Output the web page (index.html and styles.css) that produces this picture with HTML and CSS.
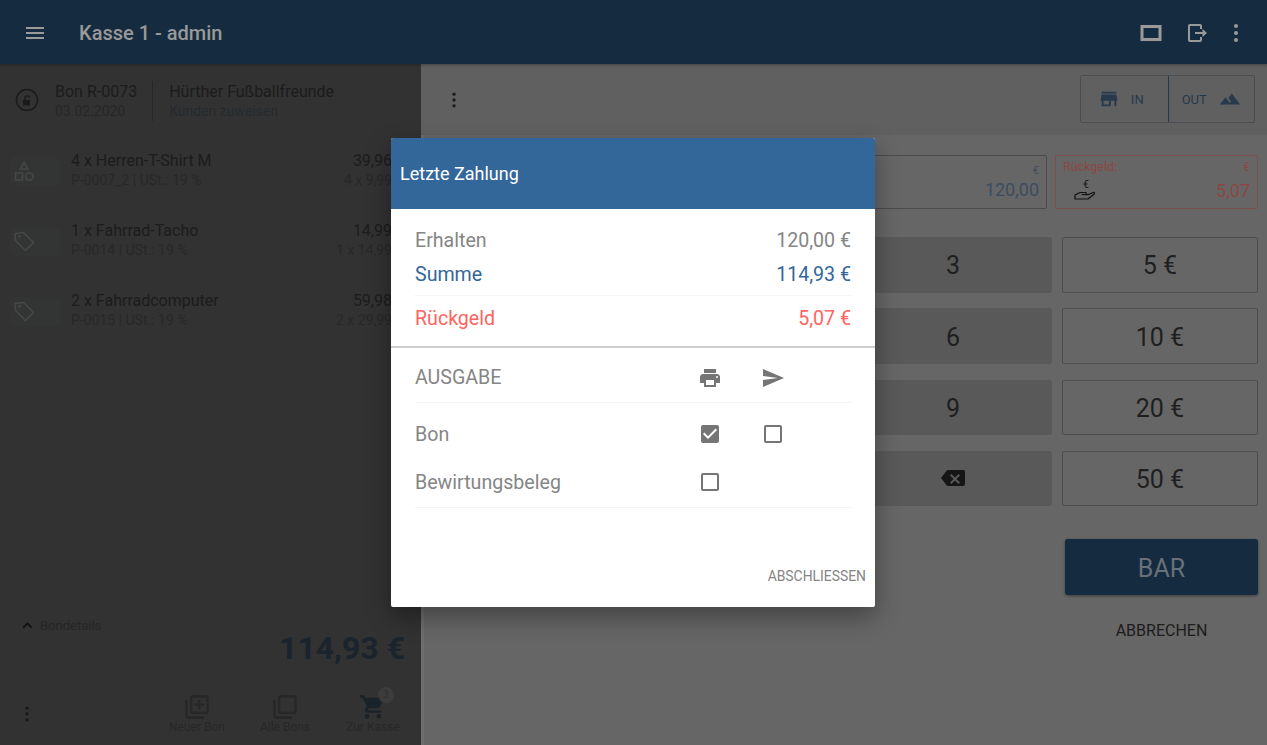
FILE: index.html
```html
<!DOCTYPE html>
<html lang="de">
<head>
    <meta charset="UTF-8">
    <meta name="viewport" content="width=device-width, initial-scale=1.0">
    <title>Kasse 1 - admin</title>
    <link rel="stylesheet" href="styles.css">
</head>
<body>
    <!-- Top bar -->
    <header class="topbar">
        <svg class="icon menu-icon" viewBox="0 0 24 24"><path d="M3 18h18v-2H3v2zm0-5h18v-2H3v2zm0-7v2h18V6H3z"/></svg>
        <h1 class="topbar-title">Kasse 1 - admin</h1>
        <div class="topbar-actions">
            <svg class="icon screen-icon" viewBox="0 0 24 24"><path d="M1.500 4h21v16h-21V4zm3 3v10h15V7h-15z" fill-rule="evenodd"/></svg>
            <svg class="icon" viewBox="0 0 24 24"><path d="M5 3h10a2 2 0 0 1 2 2v3h-2V5H5v14h10v-3h2v3a2 2 0 0 1-2 2H5a2 2 0 0 1-2-2V5a2 2 0 0 1 2-2zm12.500 5 4.500 4-4.500 4v-3H10v-2h7.500V8z"/></svg>
            <svg class="icon" viewBox="0 0 24 24"><circle cx="12" cy="5" r="2"/><circle cx="12" cy="12" r="2"/><circle cx="12" cy="19" r="2"/></svg>
        </div>
    </header>

    <main class="main">
        <!-- Receipt -->
        <section class="receipt">
            <div class="receipt-head">
                <svg class="lock-icon" viewBox="0 0 24 24"><circle cx="12" cy="12" r="10.500" fill="none" stroke="#1a1a1a" stroke-width="1.500"/><path d="M8 12h7v5.500H8z" fill="#1a1a1a"/><path d="M10 12v-2a2.200 2.200 0 0 1 4.400 0" fill="none" stroke="#1a1a1a" stroke-width="1.300"/></svg>
                <div class="head-col">
                    <span class="head-title">Bon R-0073</span>
                    <span class="head-sub">03.02.2020</span>
                </div>
                <div class="head-col head-customer">
                    <span class="head-title">Hürther Fußballfreunde</span>
                    <span class="head-link">Kunden zuweisen</span>
                </div>
            </div>

            <ul class="lines">
                <li class="line">
                    <div class="line-thumb">
                        <svg viewBox="0 0 24 24" class="thumb-icon"><path d="M12 3.500l3.800 6.500H8.200zM3.500 14h7v7h-7z" fill="none" stroke="#474747" stroke-width="1.500"/><circle cx="17.300" cy="17.500" r="3.700" fill="none" stroke="#474747" stroke-width="1.500"/></svg>
                    </div>
                    <div class="line-info">
                        <span class="line-name">4 x Herren-T-Shirt M</span>
                        <span class="line-sub">P-0007_2 | USt.: 19 %</span>
                    </div>
                    <div class="line-price">
                        <span class="line-name">39,96</span>
                        <span class="line-sub">4 x 9,99</span>
                    </div>
                </li>
                <li class="line">
                    <div class="line-thumb">
                        <svg viewBox="0 0 24 24" class="thumb-icon"><path d="M3 4.500 11.500 3.500 21.500 13.500 13.500 21.500 3.500 11.500z" fill="none" stroke="#474747" stroke-width="1.500" stroke-linejoin="round"/><circle cx="7.500" cy="7.500" r="1.300" fill="#474747"/></svg>
                    </div>
                    <div class="line-info">
                        <span class="line-name">1 x Fahrrad-Tacho</span>
                        <span class="line-sub">P-0014 | USt.: 19 %</span>
                    </div>
                    <div class="line-price">
                        <span class="line-name">14,99</span>
                        <span class="line-sub">1 x 14,99</span>
                    </div>
                </li>
                <li class="line">
                    <div class="line-thumb">
                        <svg viewBox="0 0 24 24" class="thumb-icon"><path d="M3 4.500 11.500 3.500 21.500 13.500 13.500 21.500 3.500 11.500z" fill="none" stroke="#474747" stroke-width="1.500" stroke-linejoin="round"/><circle cx="7.500" cy="7.500" r="1.300" fill="#474747"/></svg>
                    </div>
                    <div class="line-info">
                        <span class="line-name">2 x Fahrradcomputer</span>
                        <span class="line-sub">P-0015 | USt.: 19 %</span>
                    </div>
                    <div class="line-price">
                        <span class="line-name">59,98</span>
                        <span class="line-sub">2 x 29,99</span>
                    </div>
                </li>
            </ul>

            <div class="receipt-foot">
                <div class="details-toggle">
                    <svg viewBox="0 0 24 24" class="chevron"><path d="M7.400 15.400 12 10.800l4.600 4.600L18 14l-6-6-6 6z"/></svg>
                    <span>Bondetails</span>
                </div>
                <div class="total">114,93 €</div>
                <div class="foot-bar">
                    <svg class="more-icon" viewBox="0 0 24 24"><circle cx="12" cy="5" r="2"/><circle cx="12" cy="12" r="2"/><circle cx="12" cy="19" r="2"/></svg>
                    <div class="foot-action">
                        <svg viewBox="0 0 24 24"><path d="M4 6H2v14a2 2 0 0 0 2 2h14v-2H4V6zm16-4H8a2 2 0 0 0-2 2v12a2 2 0 0 0 2 2h12a2 2 0 0 0 2-2V4a2 2 0 0 0-2-2zm0 14H8V4h12v12zm-7-2h2v-3h3V9h-3V6h-2v3h-3v2h3v3z"/></svg>
                        <span>Neuer Bon</span>
                    </div>
                    <div class="foot-action">
                        <svg viewBox="0 0 24 24"><path d="M4 6H2v14a2 2 0 0 0 2 2h14v-2H4V6zm16-4H8a2 2 0 0 0-2 2v12a2 2 0 0 0 2 2h12a2 2 0 0 0 2-2V4a2 2 0 0 0-2-2zm0 14H8V4h12v12z"/></svg>
                        <span>Alle Bons</span>
                    </div>
                    <div class="foot-action cart">
                        <svg viewBox="0 0 24 24"><path d="M7 18a2 2 0 1 0 0 4 2 2 0 0 0 0-4zM1 2v2h2l3.600 7.600-1.400 2.400C4.500 15.400 5.500 17 7 17h12v-2H7.400l1.100-2h7.500c.700 0 1.400-.400 1.700-1L21.300 5.500c.400-.700-.100-1.500-.900-1.500H5.200l-.900-2H1zm16 16a2 2 0 1 0 0 4 2 2 0 0 0 0-4z"/></svg>
                        <span>Zur Kasse</span>
                        <em class="cart-badge">3</em>
                    </div>
                </div>
            </div>
        </section>

        <!-- Payment side -->
        <section class="pay">
            <div class="pay-bar">
                <svg class="more-icon pay-more" viewBox="0 0 24 24"><circle cx="12" cy="5" r="2"/><circle cx="12" cy="12" r="2"/><circle cx="12" cy="19" r="2"/></svg>
                <div class="inout">
                    <div class="inout-btn inout-first">
                        <svg viewBox="0 0 24 24"><path d="M20 4H4v2h16V4zm1 10v-2l-1-5H4l-1 5v2h1v6h10v-6h4v6h2v-6h1zm-9 4H6v-4h6v4z"/></svg>
                        <span>IN</span>
                    </div>
                    <div class="inout-btn">
                        <span>OUT</span>
                        <svg viewBox="0 0 24 24"><path d="M14 6l-3.750 5 2.850 3.800-1.600 1.200C9.810 13.750 7 10 7 10l-6 8h22L14 6z"/></svg>
                    </div>
                </div>
            </div>

            <div class="pay-body">
                <div class="amounts">
                    <div class="amount-box">
                        <span class="amount-unit">€</span>
                        <span class="amount-value">120,00</span>
                    </div>
                    <div class="amount-box amount-change">
                        <div class="amount-top"><span>Rückgeld:</span><span>€</span></div>
                        <div class="amount-row">
                            <svg class="hand-icon" viewBox="0 0 24 24"><path d="M2 21v-4l5-2.500h5.500c1.200 0 1.200 2 0 2H9l6 .200 5-2.200c1.500-.500 2 1 1 1.700L15 21z" fill="none" stroke="#111" stroke-width="1.200" stroke-linejoin="round"/><text x="13" y="10" font-size="10" fill="#111" text-anchor="middle" font-family="Roboto">€</text></svg>
                            <span class="amount-value">5,07</span>
                        </div>
                    </div>
                </div>

                <div class="keypad">
                    <div class="key-num"></div><div class="key-num"></div><div class="key-num">3</div><div class="key-cash">5 €</div>
                    <div class="key-num"></div><div class="key-num"></div><div class="key-num">6</div><div class="key-cash">10 €</div>
                    <div class="key-num"></div><div class="key-num"></div><div class="key-num">9</div><div class="key-cash">20 €</div>
                    <div class="key-num"></div><div class="key-num"></div>
                    <div class="key-num">
                        <svg class="back-icon" viewBox="0 0 24 24"><path d="M22 4H7c-.700 0-1.200.300-1.600.900L0 12l5.400 7.100c.400.600.900.900 1.600.900h15a2 2 0 0 0 2-2V6a2 2 0 0 0-2-2zm-3 12.600L17.600 18 14 14.400 10.400 18 9 16.600l3.600-3.600L9 9.400 10.400 8 14 11.600 17.600 8 19 9.400 15.400 13z"/></svg>
                    </div>
                    <div class="key-cash">50 €</div>
                </div>

                <div class="pay-actions">
                    <div class="bar-btn">BAR</div>
                    <div class="cancel-btn">ABBRECHEN</div>
                </div>
            </div>
        </section>
    </main>

    <!-- Dialog -->
    <div class="dialog">
        <div class="dialog-title">Letzte Zahlung</div>
        <div class="sums">
            <div class="sum-row sum-received"><span>Erhalten</span><span>120,00 €</span></div>
            <div class="sum-row sum-total"><span>Summe</span><span>114,93 €</span></div>
            <div class="sum-row sum-change"><span>Rückgeld</span><span>5,07 €</span></div>
        </div>
        <div class="output">
            <div class="output-head">
                <span class="output-label">AUSGABE</span>
                <svg class="cell" viewBox="0 0 24 24"><path d="M19 8H5c-1.660 0-3 1.340-3 3v6h4v4h12v-4h4v-6c0-1.660-1.340-3-3-3zm-3 11H8v-5h8v5zm3-7a1 1 0 1 1 0-2 1 1 0 0 1 0 2zm-1-9H6v4h12V3z"/></svg>
                <svg class="cell" viewBox="0 0 24 24"><path d="M2.010 21 23 12 2.010 3 2 10l15 2-15 2z"/></svg>
            </div>
            <div class="output-rows">
                <div class="output-row">
                    <span class="output-label">Bon</span>
                    <svg class="cell" viewBox="0 0 24 24"><path d="M19 3H5a2 2 0 0 0-2 2v14a2 2 0 0 0 2 2h14a2 2 0 0 0 2-2V5a2 2 0 0 0-2-2zm-9 14-5-5 1.410-1.410L10 14.170l7.590-7.590L19 8l-9 9z"/></svg>
                    <svg class="cell" viewBox="0 0 24 24"><path d="M19 5v14H5V5h14m0-2H5a2 2 0 0 0-2 2v14a2 2 0 0 0 2 2h14a2 2 0 0 0 2-2V5a2 2 0 0 0-2-2z"/></svg>
                </div>
                <div class="output-row">
                    <span class="output-label">Bewirtungsbeleg</span>
                    <svg class="cell" viewBox="0 0 24 24"><path d="M19 5v14H5V5h14m0-2H5a2 2 0 0 0-2 2v14a2 2 0 0 0 2 2h14a2 2 0 0 0 2-2V5a2 2 0 0 0-2-2z"/></svg>
                </div>
            </div>
        </div>
        <div class="dialog-actions">ABSCHLIESSEN</div>
    </div>
</body>
</html>
```

FILE: styles.css
```css
* {
    margin: 0;
    padding: 0;
    box-sizing: border-box;
}

body {
    width: 1267px;
    height: 745px;
    overflow: hidden;
    position: relative;
    font-family: Roboto, "Liberation Sans", sans-serif;
    background-color: #666;
    color: #1c1c1c;
    display: flex;
    flex-direction: column;
}

.icon {
    width: 24px;
    height: 24px;
    fill: #9a9a9a;
}

/* Top bar */
.topbar {
    height: 64px;
    flex: none;
    background-color: #152b40;
    display: flex;
    align-items: center;
    padding: 2px 19px 0 23px;
    box-shadow: 0 1px 3px rgba(0, 0, 0, 0.3);
    position: relative;
}

.topbar-title {
    margin-left: 32px;
    font-size: 20px;
    font-weight: 500;
    color: #999;
}

.topbar-actions {
    margin-left: auto;
    display: flex;
    gap: 15px;
}

.screen-icon {
    margin-right: 7px;
}

.main {
    flex: 1;
    display: flex;
    min-height: 0;
}

/* Receipt */
.receipt {
    width: 421px;
    flex: none;
    background-color: #323232;
    display: flex;
    flex-direction: column;
}

.receipt-head {
    height: 70px;
    display: flex;
    align-items: center;
    padding: 3px 0 0 15px;
}

.lock-icon {
    width: 24px;
    height: 24px;
    flex: none;
    margin: -2px 16px 0 0;
}

.head-col {
    display: flex;
    flex-direction: column;
    gap: 2px;
    padding-right: 15px;
}

.head-customer {
    height: 40px;
    justify-content: center;
    padding-left: 16px;
    border-left: 1px solid #262626;
}

.head-title {
    font-size: 16px;
    color: #1c1c1c;
}

.head-sub {
    font-size: 14px;
    color: #272727;
}

.head-link {
    font-size: 14px;
    color: #262a2e;
}

.lines {
    list-style: none;
}

.line {
    height: 70px;
    display: flex;
    align-items: center;
    padding: 0 29px 0 10px;
}

.line-thumb {
    width: 50px;
    height: 29px;
    margin: 4px 11px 0 0;
    background-color: #333535;
    border-radius: 6px;
    display: flex;
    align-items: center;
    padding-left: 2px;
}

.thumb-icon {
    width: 24px;
    height: 24px;
}

.line-info {
    flex: 1;
    display: flex;
    flex-direction: column;
    gap: 2px;
}

.line-price {
    display: flex;
    flex-direction: column;
    align-items: flex-end;
    gap: 2px;
}

.line-name {
    font-size: 16px;
    color: #1c1c1c;
}

.line-sub {
    font-size: 14px;
    color: #282828;
}

.receipt-foot {
    margin-top: auto;
    padding-bottom: 11px;
}

.details-toggle {
    display: flex;
    align-items: center;
    gap: 3px;
    padding-left: 18px;
    font-size: 13px;
    color: #262626;
}

.chevron {
    width: 19px;
    height: 19px;
    fill: #0e0e0e;
}

.total {
    margin-top: -6px;
    padding-right: 16px;
    text-align: right;
    font-size: 32px;
    font-weight: 700;
    color: #1b242d;
}

.foot-bar {
    margin-top: 26px;
    display: flex;
    align-items: center;
    padding-right: 4px;
}

.more-icon {
    width: 20px;
    height: 20px;
    fill: #1a1a1a;
}

.foot-bar .more-icon {
    margin: 0 auto 0 17px;
}

.foot-action {
    width: 88px;
    display: flex;
    flex-direction: column;
    align-items: center;
    gap: 1px;
    font-size: 12px;
    color: #272727;
    position: relative;
}

.foot-action svg {
    width: 28px;
    height: 28px;
    margin-bottom: -2px;
    fill: #272727;
}

.cart svg {
    fill: #1a222a;
}

.cart-badge {
    position: absolute;
    top: -6px;
    right: 23px;
    width: 16px;
    height: 16px;
    border-radius: 50%;
    background-color: #3c3c3c;
    color: #2e2e2e;
    font-style: normal;
    font-size: 10px;
    text-align: center;
    line-height: 16px;
}

/* Payment side */
.pay {
    flex: 1;
    display: flex;
    flex-direction: column;
    box-shadow: inset 3px 0 0 #6e6e6e;
}

.pay-bar {
    height: 71px;
    flex: none;
    background-color: #606060;
    display: flex;
    align-items: center;
    justify-content: space-between;
    padding: 0 12px 0 23px;
}

.pay-more {
    fill: #1c1c1c;
}

.inout {
    display: flex;
    border: 1px solid #4b4d50;
    border-radius: 2px;
    height: 48px;
    margin-top: -1px;
}

.inout-btn {
    width: 86.500px;
    display: flex;
    align-items: center;
    justify-content: center;
    gap: 12px;
    font-size: 13px;
    color: #26394d;
}

.inout-first {
    gap: 11px;
    padding-right: 7px;
}

.inout-btn + .inout-btn {
    border-left: 1px solid #26394d;
}

.inout-btn svg {
    width: 22px;
    height: 22px;
    fill: #26394d;
}

.pay-body {
    flex: 1;
    padding: 20px 9px 0 17px;
}

.amounts {
    display: flex;
    justify-content: flex-end;
    gap: 8px;
}

.amount-box {
    width: 203px;
    height: 54px;
    border: 1px solid #4a4a4a;
    border-radius: 2px;
    display: flex;
    flex-direction: column;
    align-items: flex-end;
    padding: 8px 7px 0;
    font-size: 18px;
    color: #3c4d60;
}

.amount-unit {
    font-size: 11px;
    margin-bottom: 2px;
}

.amount-value {
    font-size: 18px;
}

.amount-change {
    border-color: #7a4f4d;
    color: #8c4644;
    align-items: stretch;
    padding-top: 3px;
}

.amount-top {
    display: flex;
    justify-content: space-between;
    font-size: 12.500px;
}

.amount-row {
    display: flex;
    align-items: center;
    justify-content: space-between;
    margin-top: 4px;
}

.hand-icon {
    width: 24px;
    height: 24px;
    margin-left: 10px;
}

.keypad {
    margin-top: 28px;
    display: grid;
    grid-template-columns: repeat(3, 1fr) 196px;
    grid-auto-rows: 55.500px;
    gap: 15.830px 10px;
    font-size: 25px;
    color: #1f1f1f;
}

.key-num {
    background-color: #595959;
    border-radius: 3px;
    padding-top: 2px;
    display: flex;
    align-items: center;
    justify-content: center;
}

.key-cash {
    border: 1px solid #4b4d50;
    border-radius: 2px;
    padding-top: 2px;
    display: flex;
    align-items: center;
    justify-content: center;
}

.back-icon {
    width: 24px;
    height: 24px;
    margin-top: -4px;
    fill: #161616;
}

.pay-actions {
    width: 193px;
    margin: 33px 0 0 auto;
}

.bar-btn {
    height: 56px;
    padding-top: 2px;
    background-color: #152b40;
    border-radius: 3px;
    box-shadow: 0 1px 3px rgba(0, 0, 0, 0.4);
    display: flex;
    align-items: center;
    justify-content: center;
    font-size: 25px;
    color: #68707a;
}

.cancel-btn {
    margin-top: 26px;
    text-align: center;
    font-size: 16px;
    color: #1c1c1c;
}

/* Dialog */
.dialog {
    position: absolute;
    left: 391px;
    top: 138px;
    width: 484px;
    height: 469px;
    background-color: #fff;
    border-radius: 2px;
    box-shadow: 0 10px 25px rgba(0, 0, 0, 0.35);
    display: flex;
    flex-direction: column;
    color: #858585;
}

.dialog-title {
    height: 71px;
    flex: none;
    background-color: #336699;
    border-radius: 2px 2px 0 0;
    display: flex;
    align-items: center;
    padding-left: 9px;
    font-size: 18px;
    color: #fff;
}

.sums {
    padding: 14px 24px 0;
    height: 139px;
    flex: none;
    border-bottom: 2px solid #cfcfcf;
}

.sum-row {
    display: flex;
    justify-content: space-between;
    align-items: center;
    font-size: 19.600px;
    height: 35px;
}

.sum-total {
    margin-top: -1px;
    color: #336699;
}

.sum-change {
    margin-top: 3px;
    height: 45px;
    border-top: 1px solid #f3f4f6;
    color: #ff6460;
}

.output {
    padding: 0 24px;
}

.output-head {
    height: 55px;
    padding-top: 5px;
    display: flex;
    align-items: center;
    border-bottom: 1px solid #f3f4f6;
}

.output-rows {
    padding: 7px 0 1px;
    border-bottom: 1px solid #f3f4f6;
}

.output-row {
    height: 48px;
    display: flex;
    align-items: center;
}

.output-label {
    width: 283px;
    font-size: 19.600px;
}

.output svg {
    fill: #757575;
}

.cell {
    width: 24px;
    height: 24px;
    flex: none;
    margin-right: 39px;
}

.dialog-actions {
    margin-top: auto;
    padding: 0 9px 23px 0;
    text-align: right;
    font-size: 13.900px;
}
```
